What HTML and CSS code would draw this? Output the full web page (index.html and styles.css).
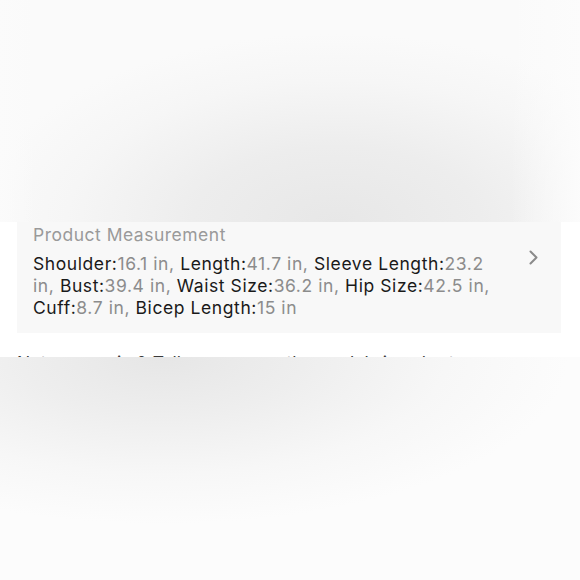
FILE: index.html
```html
<!DOCTYPE html>
<html lang="en">
<head>
<meta charset="utf-8">
<title>Product Measurement</title>
<link rel="stylesheet" href="styles.css">
</head>
<body>
<div class="page">
  <div class="blur blur-top"></div>
  <section class="sheet">
    <div class="card">
      <div class="card-body">
        <div class="title">Product Measurement</div>
        <p class="specs"><span class="k">Shoulder:</span><span class="v">16.1 in, </span><span class="k">Length:</span><span class="v">41.7 in, </span><span class="k">Sleeve Length:</span><span class="v">23.2 in, </span><span class="k">Bust:</span><span class="v">39.4 in, </span><span class="k">Waist Size:</span><span class="v">36.2 in, </span><span class="k">Hip Size:</span><span class="v">42.5 in, </span><span class="k">Cuff:</span><span class="v">8.7 in, </span><span class="k">Bicep Length:</span><span class="v">15 in</span></p>
      </div>
      <svg class="chev" width="9" height="15" viewBox="0 0 9 15" aria-hidden="true"><path d="M1.5 1.5 L7.5 7.5 L1.5 13.5" fill="none" stroke="#8a8a8a" stroke-width="2" stroke-linecap="round" stroke-linejoin="round"/></svg>
    </div>
    <p class="notes">Notes: runs in &amp; Tall measure as the model size chart</p>
  </section>
  <div class="blur blur-bottom"></div>
</div>
</body>
</html>
```

FILE: styles.css
```css
* { box-sizing: border-box; }
html, body { margin: 0; padding: 0; background: #ffffff; }
body {
  font-family: Inter, "Liberation Sans", Arial, sans-serif;
  -webkit-font-smoothing: antialiased;
}
.page {
  width: 580px;
  height: 580px;
  display: flex;
  flex-direction: column;
  overflow: hidden;
}
.blur { flex: none; }
.blur-top {
  height: 222px;
  background:
    linear-gradient(90deg, rgba(251,251,251,0.9) 0%, rgba(251,251,251,0) 6%, rgba(251,251,251,0) 88%, rgba(252,252,252,0.95) 100%),
    radial-gradient(ellipse 62% 85% at 58% 100%, #e7e7e7 0%, #ededed 40%, #f6f6f6 75%, #fafafa 100%);
}
.blur-bottom {
  height: 223px;
  background:
    radial-gradient(ellipse 70% 75% at 28% 0%, #e6e6e6 0%, #eeeeee 35%, #f7f7f7 70%, #fcfcfc 100%);
}
.sheet {
  flex: none;
  height: 135px;
  background: #ffffff;
  overflow: hidden;
}
.card {
  margin: 0 19px 0 17px;
  height: 111px;
  background: #f8f8f8;
  display: flex;
  align-items: flex-start;
  gap: 24px;
  padding: 2px 23px 0 16px;
}
.card-body { flex: 1; min-width: 0; }
.title {
  font-size: 17.5px;
  line-height: 22px;
  color: #9a9a9a;
  letter-spacing: 0.5px;
}
.specs {
  margin: 7px 0 0;
  font-size: 17.5px;
  line-height: 22px;
  letter-spacing: 0.58px;
}
.k { color: #1a1a1a; }
.v { color: #8c8c8c; }
.chev { flex: none; margin-top: 26px; }
.notes {
  margin: 19px 0 0 17px;
  font-size: 17.5px;
  line-height: 22px;
  color: #3a3a3a;
  white-space: nowrap;
}
```
